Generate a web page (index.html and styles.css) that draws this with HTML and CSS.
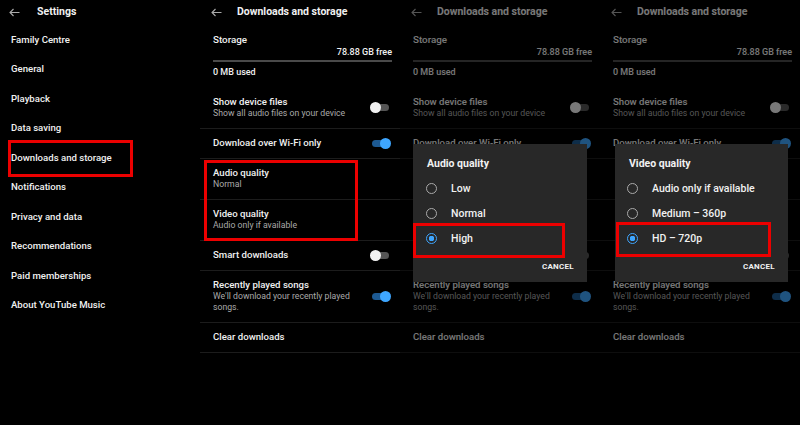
FILE: index.html
```html
<!DOCTYPE html>
<html lang="en">
  <head>
    <meta charset="UTF-8" />
    <meta name="viewport" content="width=device-width, initial-scale=1.0" />
    <title>YouTube Music - Downloads and storage</title>
    <link rel="stylesheet" href="styles.css">
  </head>
  <body>
    <div class="screens">
      <!-- Settings list -->
      <section class="panel">
        <header class="bar">
          <svg class="back" width="11" height="9" viewBox="0 0 11 9"><path d="M10.5 4.5H1M4.5 1L1 4.5L4.5 8" /></svg>
          <h1>Settings</h1>
        </header>
        <ul class="menu">
          <li>Family Centre</li>
          <li>General</li>
          <li>Playback</li>
          <li>Data saving</li>
          <li class="marked">Downloads and storage</li>
          <li>Notifications</li>
          <li>Privacy and data</li>
          <li>Recommendations</li>
          <li>Paid memberships</li>
          <li>About YouTube Music</li>
        </ul>
      </section>

      <!-- Downloads and storage -->
      <section class="panel">
        <header class="bar">
          <svg class="back" width="11" height="9" viewBox="0 0 11 9"><path d="M10.5 4.5H1M4.5 1L1 4.5L4.5 8" /></svg>
          <h1>Downloads and storage</h1>
        </header>
        <div class="storage">
          <div class="label">Storage</div>
          <div class="free">78.88 GB free</div>
          <div class="meter"></div>
          <div class="used">0 MB used</div>
        </div>
        <div class="row">
          <div class="text"><div class="title">Show device files</div><div class="sub">Show all audio files on your device</div></div>
          <span class="switch"></span>
        </div>
        <div class="row">
          <div class="text"><div class="title">Download over Wi-Fi only</div></div>
          <span class="switch on"></span>
        </div>
        <div class="group marked-group">
          <div class="row">
            <div class="text"><div class="title">Audio quality</div><div class="sub">Normal</div></div>
          </div>
          <div class="row">
            <div class="text"><div class="title">Video quality</div><div class="sub">Audio only if available</div></div>
          </div>
        </div>
        <div class="row">
          <div class="text"><div class="title">Smart downloads</div></div>
          <span class="switch"></span>
        </div>
        <div class="row">
          <div class="text"><div class="title">Recently played songs</div><div class="sub">We'll download your recently played songs.</div></div>
          <span class="switch on"></span>
        </div>
        <div class="row">
          <div class="text"><div class="title">Clear downloads</div></div>
        </div>
      </section>

      <!-- Audio quality dialog -->
      <section class="panel dimmed">
        <header class="bar">
          <svg class="back" width="11" height="9" viewBox="0 0 11 9"><path d="M10.5 4.5H1M4.5 1L1 4.5L4.5 8" /></svg>
          <h1>Downloads and storage</h1>
        </header>
        <div class="storage">
          <div class="label">Storage</div>
          <div class="free">78.88 GB free</div>
          <div class="meter"></div>
          <div class="used">0 MB used</div>
        </div>
        <div class="row">
          <div class="text"><div class="title">Show device files</div><div class="sub">Show all audio files on your device</div></div>
          <span class="switch"></span>
        </div>
        <div class="row">
          <div class="text"><div class="title">Download over Wi-Fi only</div></div>
          <span class="switch on"></span>
        </div>
        <div class="row covered">
          <div class="text"><div class="title">Audio quality</div><div class="sub">Normal</div></div>
        </div>
        <div class="row covered">
          <div class="text"><div class="title">Video quality</div><div class="sub">Audio only if available</div></div>
        </div>
        <div class="row covered">
          <div class="text"><div class="title">Smart downloads</div></div>
          <span class="switch"></span>
        </div>
        <div class="row">
          <div class="text"><div class="title">Recently played songs</div><div class="sub">We'll download your recently played songs.</div></div>
          <span class="switch on"></span>
        </div>
        <div class="row">
          <div class="text"><div class="title">Clear downloads</div></div>
        </div>

        <div class="dialog">
          <h2>Audio quality</h2>
          <div class="option"><span class="radio"></span>Low</div>
          <div class="option"><span class="radio"></span>Normal</div>
          <div class="option selected marked-option"><span class="radio"></span>High</div>
          <div class="actions">CANCEL</div>
        </div>
      </section>

      <!-- Video quality dialog -->
      <section class="panel dimmed">
        <header class="bar">
          <svg class="back" width="11" height="9" viewBox="0 0 11 9"><path d="M10.5 4.5H1M4.5 1L1 4.5L4.5 8" /></svg>
          <h1>Downloads and storage</h1>
        </header>
        <div class="storage">
          <div class="label">Storage</div>
          <div class="free">78.88 GB free</div>
          <div class="meter"></div>
          <div class="used">0 MB used</div>
        </div>
        <div class="row">
          <div class="text"><div class="title">Show device files</div><div class="sub">Show all audio files on your device</div></div>
          <span class="switch"></span>
        </div>
        <div class="row">
          <div class="text"><div class="title">Download over Wi-Fi only</div></div>
          <span class="switch on"></span>
        </div>
        <div class="row covered">
          <div class="text"><div class="title">Audio quality</div><div class="sub">Normal</div></div>
        </div>
        <div class="row covered">
          <div class="text"><div class="title">Video quality</div><div class="sub">Audio only if available</div></div>
        </div>
        <div class="row covered">
          <div class="text"><div class="title">Smart downloads</div></div>
          <span class="switch"></span>
        </div>
        <div class="row">
          <div class="text"><div class="title">Recently played songs</div><div class="sub">We'll download your recently played songs.</div></div>
          <span class="switch on"></span>
        </div>
        <div class="row">
          <div class="text"><div class="title">Clear downloads</div></div>
        </div>

        <div class="dialog">
          <h2>Video quality</h2>
          <div class="option"><span class="radio"></span>Audio only if available</div>
          <div class="option"><span class="radio"></span>Medium – 360p</div>
          <div class="option selected marked-option wide"><span class="radio"></span>HD – 720p</div>
          <div class="actions">CANCEL</div>
        </div>
      </section>
    </div>
  </body>
</html>
```

FILE: styles.css
```css
/* General */
body {
  margin: 0;
  padding: 0;
  background-color: #000;
  color: #f1f1f1;
  font-family: Roboto, "Noto Sans", Arial, sans-serif;
}

.screens {
  display: grid;
  grid-template-columns: repeat(4, 200px);
  height: 425px;
  overflow: hidden;
}

.panel {
  position: relative;
  background-color: #000;
}

/* Top bar */
.bar {
  display: flex;
  align-items: center;
  height: 24px;
  padding-left: 9px;
}

.back {
  flex: none;
}

.back path {
  fill: none;
  stroke: #aaa;
  stroke-width: 1.1;
}

.bar h1 {
  margin: 0 0 0 17px;
  font-size: 10.5px;
  font-weight: 700;
  line-height: 12px;
}

.panel + .panel .bar {
  padding-left: 11px;
}

.panel + .panel .bar h1 {
  margin-left: 15px;
}

/* Settings menu */
.menu {
  list-style: none;
  margin: 0;
  padding: 0;
}

.menu li {
  position: relative;
  padding: 9.5px 11px 8px;
  font-size: 9.6px;
  font-weight: 500;
  line-height: 12px;
}

/* Red annotation boxes */
.marked::after,
.marked-group::after,
.marked-option::after {
  content: "";
  position: absolute;
  border: 3px solid #ec0000;
  pointer-events: none;
}

.marked::after {
  left: 8px;
  top: -2px;
  width: 119px;
  height: 31px;
}

.group {
  position: relative;
}

.marked-group::after {
  left: 4px;
  top: 1px;
  width: 148px;
  bottom: 0;
}

/* Storage block */
.storage {
  padding: 10px 8px 10px 13px;
  font-weight: 500;
}

.storage .label {
  font-size: 9.8px;
  line-height: 12px;
}

.storage .free {
  font-size: 9px;
  line-height: 12px;
  text-align: right;
}

.storage .meter {
  height: 2px;
  margin-top: 2px;
  background-color: #4a4a4a;
}

.storage .used {
  margin-top: 4px;
  font-size: 9px;
  line-height: 12px;
}

/* Setting rows */
.row {
  display: flex;
  align-items: center;
  padding: 8.5px 11px 8.5px 13px;
  border-bottom: 1px solid #1c1c1c;
}

.storage + .row {
  padding-top: 8px;
}

.row .text {
  flex: 1;
  min-width: 0;
}

.row .title {
  font-size: 9.6px;
  font-weight: 500;
  line-height: 12px;
}

.row .sub {
  font-size: 8.7px;
  line-height: 11px;
  color: #aaa;
}

/* Toggle switches */
.switch {
  position: relative;
  flex: none;
  width: 17px;
  height: 7px;
  margin-left: 18px;
  border-radius: 4px;
  background-color: #555;
}

.switch::before {
  content: "";
  position: absolute;
  top: -2px;
  left: -2px;
  width: 11px;
  height: 11px;
  border-radius: 50%;
  background-color: #f1f1f1;
}

.switch.on {
  background-color: #1d5a93;
}

.switch.on::before {
  left: 8px;
  background-color: #3ea6ff;
}

/* Dim layer behind dialogs */
.dimmed::after {
  content: "";
  position: absolute;
  inset: 0;
  background-color: rgba(0, 0, 0, 0.5);
}

/* rows hidden under the dialog box */
.covered .text {
  visibility: hidden;
}

/* Dialog */
.dialog {
  position: absolute;
  z-index: 1;
  left: 13px;
  top: 144px;
  width: 174px;
  padding: 14px 0 10px;
  background-color: #282828;
}

.panel:last-child .dialog {
  left: 15px;
  width: 173px;
}

.dialog h2 {
  margin: 0 0 5.5px 14px;
  font-size: 10.5px;
  font-weight: 700;
  line-height: 12px;
}

.option {
  position: relative;
  display: flex;
  align-items: center;
  height: 25px;
  padding-left: 13px;
  font-size: 10.5px;
  font-weight: 500;
}

.panel:last-child .option {
  padding-left: 12px;
}

.radio {
  box-sizing: border-box;
  width: 11px;
  height: 11px;
  margin-right: 14px;
  border: 1.5px solid #aaa;
  border-radius: 50%;
}

.option.selected .radio {
  border-color: #3ea6ff;
  background: radial-gradient(circle, #3ea6ff 2.6px, transparent 3px);
}

.marked-option::after {
  left: 0;
  top: -3px;
  width: 146px;
  height: 29px;
}

.marked-option.wide::after {
  left: 1px;
  top: -4px;
  width: 149px;
}

.actions {
  margin-top: 11px;
  padding-right: 13px;
  text-align: right;
  font-size: 8px;
  font-weight: 700;
  line-height: 10px;
  letter-spacing: 0.3px;
}
```
